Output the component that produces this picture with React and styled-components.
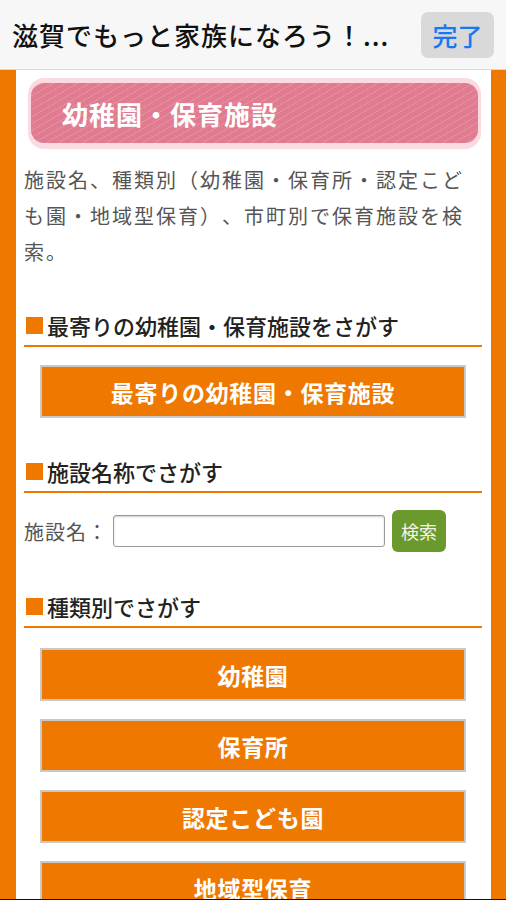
import React from 'react';
import styled, { createGlobalStyle } from 'styled-components';

const GlobalStyle = createGlobalStyle`
  html, body {
    margin: 0;
    padding: 0;
    background: #fff;
  }
  body {
    font-family: "Noto Sans CJK JP", "Noto Sans", sans-serif;
    color: #333;
    text-spacing-trim: space-all;
  }
`;

const Screen = styled.div`
  width: 506px;
  height: 900px;
  overflow: hidden;
  display: flex;
  flex-direction: column;
  border-bottom: 1px solid #111;
  box-sizing: border-box;
`;

const TopBar = styled.header`
  height: 70px;
  flex-shrink: 0;
  display: flex;
  align-items: center;
  justify-content: space-between;
  padding: 0 12px 0 12px;
  background: #f7f7f7;
  border-bottom: 1px solid #d9d9d9;
  box-sizing: border-box;
`;

const Title = styled.h1`
  margin: 0;
  font-size: 26px;
  font-weight: 500;
  color: #111;
  letter-spacing: 1px;
  white-space: nowrap;
`;

const DoneButton = styled.button`
  width: 73px;
  height: 46px;
  border: none;
  border-radius: 7px;
  background: #d9d9d9;
  color: #1877f2;
  font-family: inherit;
  font-size: 25px;
  font-weight: 500;
  padding: 0;
`;

const Frame = styled.div`
  flex: 1;
  background: #ef7800;
  padding: 0 15px 0 16px;
  display: flex;
`;

const Page = styled.main`
  flex: 1;
  background: #fff;
  padding: 8px 9px 0 8px;
`;

const Banner = styled.div`
  margin: 0 1px 0 4px;
  padding: 5px 3px 6px;
  border-radius: 16px;
  background: #fbdbe2;
`;

const BannerInner = styled.div`
  height: 60px;
  border-radius: 13px;
  display: flex;
  align-items: center;
  padding-left: 31px;
  background-color: #e07b90;
  background-image: repeating-linear-gradient(
    150deg,
    rgba(255, 255, 255, 0) 0 5px,
    rgba(255, 255, 255, 0.16) 5px 6px
  );
  color: #fff;
  font-size: 26px;
  font-weight: 700;
  letter-spacing: 1px;
`;

const Description = styled.p`
  margin: 13px 0 0;
  font-size: 20px;
  line-height: 36px;
  color: #555;
  letter-spacing: 2px;
`;

const Heading = styled.h2`
  margin: ${({ top }) => top}px 0 0;
  padding-bottom: 5px;
  border-bottom: 2px solid #ef7800;
  font-size: 22px;
  font-weight: 500;
  line-height: 30px;
  color: #222;
  display: flex;
  align-items: center;
`;

const Square = styled.span`
  width: 17px;
  height: 17px;
  background: #ef7800;
  margin: 0 4px 0 2px;
  flex-shrink: 0;
`;

const ButtonList = styled.div`
  display: flex;
  flex-direction: column;
  gap: 18px;
  margin-top: ${({ top }) => top}px;
  padding: 0 16px;
`;

const OrangeButton = styled.button`
  height: 53px;
  border: 2px solid #c9c9c9;
  background: #ef7800;
  color: #fff;
  font-family: inherit;
  font-size: 23px;
  font-weight: 700;
  letter-spacing: 0.7px;
  padding: 0;
`;

const SearchRow = styled.div`
  margin-top: 17px;
  display: flex;
  align-items: center;
`;

const Label = styled.label`
  font-size: 20px;
  color: #555;
  width: 89px;
  letter-spacing: 1px;
  white-space: nowrap;
`;

const TextInput = styled.input`
  width: 272px;
  height: 32px;
  box-sizing: border-box;
  border: 1px solid #9a9a9a;
  border-radius: 3px;
  box-shadow: inset 0 1px 2px rgba(0, 0, 0, 0.2);
  margin-right: 7px;
`;

const SearchButton = styled.button`
  width: 54px;
  height: 42px;
  border: none;
  border-radius: 6px;
  background: #6b9a2c;
  color: #f4f4e8;
  font-family: inherit;
  font-size: 18px;
  padding: 0;
`;

const typeButtons = ['幼稚園', '保育所', '認定こども園', '地域型保育'];

export default function App() {
  return (
    <Screen>
      <GlobalStyle />
      <TopBar>
        <Title>滋賀でもっと家族になろう！...</Title>
        <DoneButton>完了</DoneButton>
      </TopBar>
      <Frame>
        <Page>
          <Banner>
            <BannerInner>幼稚園・保育施設</BannerInner>
          </Banner>
          <Description>
            施設名、種類別（幼稚園・保育所・認定こども園・地域型保育）、市町別で保育施設を検索。
          </Description>

          <Heading top={40}>
            <Square />最寄りの幼稚園・保育施設をさがす
          </Heading>
          <ButtonList top={18}>
            <OrangeButton>最寄りの幼稚園・保育施設</OrangeButton>
          </ButtonList>

          <Heading top={38}>
            <Square />施設名称でさがす
          </Heading>
          <SearchRow>
            <Label>施設名：</Label>
            <TextInput type="text" />
            <SearchButton>検索</SearchButton>
          </SearchRow>

          <Heading top={39}>
            <Square />種類別でさがす
          </Heading>
          <ButtonList top={20}>
            {typeButtons.map((t) => (
              <OrangeButton key={t}>{t}</OrangeButton>
            ))}
          </ButtonList>
        </Page>
      </Frame>
    </Screen>
  );
}
